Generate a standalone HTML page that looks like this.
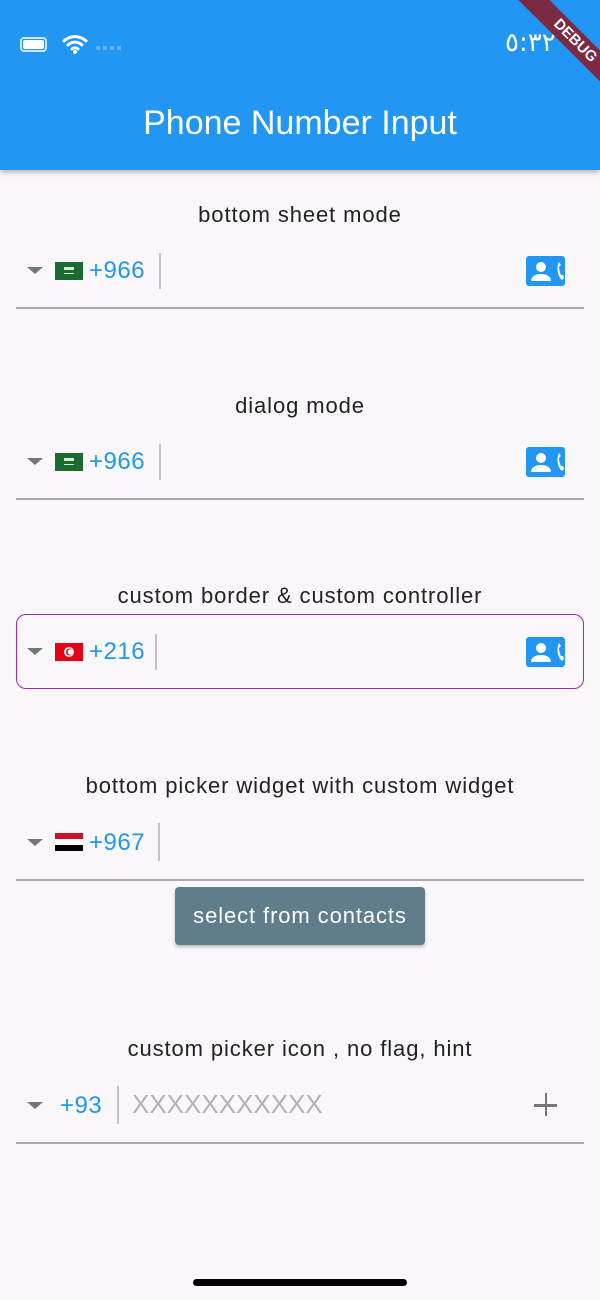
<!DOCTYPE html>
<html><head><meta charset="utf-8"><style>
*{margin:0;padding:0;box-sizing:border-box}
body{width:600px;height:1300px;background:#f9f7fa;font-family:"Liberation Sans","DejaVu Sans",sans-serif;position:relative;overflow:hidden}
.bar{position:absolute;left:0;top:0;width:600px;height:170px;background:#2196f3;box-shadow:0 2px 5px rgba(0,0,0,.3);overflow:hidden}
.title{position:absolute;top:104px;width:600px;text-align:center;color:#fff;font-size:34px}
.lbl{position:absolute;width:600px;text-align:center;font-size:22px;letter-spacing:0.9px;color:#222}
.line{position:absolute;left:16px;width:568px;height:2px;background:#a9a9ab}
.tri{position:absolute;left:27px;width:0;height:0;border-left:8px solid transparent;border-right:8px solid transparent;border-top:7px solid #757575}
.code{position:absolute;font-size:24px;letter-spacing:0.5px;color:#2196f3}
.div{position:absolute;width:2px;background:#c2c2c2}
.flag{position:absolute;left:55px;width:28px;height:18px}
.ic{position:absolute;left:526px;width:39px;height:30px}
</style></head><body>
<div class="bar">
 <div style="position:absolute;left:20px;top:37px;width:27px;height:15px;border:2px solid #cfe6fb;border-radius:4px;padding:1px"><div style="background:#fff;width:100%;height:100%;border-radius:2px"></div></div>
 <svg style="position:absolute;left:62px;top:34px" width="26" height="20" viewBox="0 0 26 20"><path d="M2 7a16 16 0 0 1 22 0M6 11a10 10 0 0 1 14 0M10 15a4.5 4.5 0 0 1 6 0" stroke="#fff" stroke-width="3" fill="none" stroke-linecap="round"/><circle cx="13" cy="18" r="2" fill="#fff"/></svg>
 <div style="position:absolute;left:96px;top:46px;width:28px;height:4px;background:repeating-linear-gradient(90deg,#64b0f4 0 4px,transparent 4px 7px)"></div>
 <div style="position:absolute;left:505px;top:28px;color:#fff;font-size:26px;font-family:'DejaVu Sans',sans-serif">٥:٣٢</div>
 <div style="position:absolute;left:495px;top:30px;width:160px;height:22px;background:#7b2a45;transform:rotate(45deg);color:#fff;font-weight:bold;font-size:15px;text-align:center;line-height:22px">DEBUG</div>
 <div class="title">Phone Number Input</div>
</div>

<div class="lbl" style="top:202px">bottom sheet mode</div>
<div class="tri" style="top:267px"></div>
<svg class="flag" style="top:262px" viewBox="0 0 28 18"><rect width="28" height="18" fill="#1a6b2e"/><rect x="9" y="5" width="10" height="3" fill="#d8e8dc"/><rect x="9" y="11" width="10" height="1" fill="#d8e8dc"/></svg>
<div class="code" style="left:89px;top:257px">+966</div>
<div class="div" style="left:159px;top:253px;height:36px"></div>
<svg class="ic" style="top:256px" viewBox="0 0 39 30"><rect width="39" height="30" rx="3" fill="#2196f3"/><circle cx="15" cy="11" r="5" fill="#fff"/><path d="M5 25c0-5 5-7 10-7s10 2 10 7z" fill="#fff"/><path d="M33 6l2 3-2 2c0 3 1 6 2 8l2 0 1 3-2 2c-4-3-6-12-3-18z" fill="#fff"/></svg>
<div class="line" style="top:307px"></div>

<div class="lbl" style="top:393px">dialog mode</div>
<div class="tri" style="top:458px"></div>
<svg class="flag" style="top:453px" viewBox="0 0 28 18"><rect width="28" height="18" fill="#1a6b2e"/><rect x="9" y="5" width="10" height="3" fill="#d8e8dc"/><rect x="9" y="11" width="10" height="1" fill="#d8e8dc"/></svg>
<div class="code" style="left:89px;top:448px">+966</div>
<div class="div" style="left:159px;top:444px;height:36px"></div>
<svg class="ic" style="top:447px" viewBox="0 0 39 30"><rect width="39" height="30" rx="3" fill="#2196f3"/><circle cx="15" cy="11" r="5" fill="#fff"/><path d="M5 25c0-5 5-7 10-7s10 2 10 7z" fill="#fff"/><path d="M33 6l2 3-2 2c0 3 1 6 2 8l2 0 1 3-2 2c-4-3-6-12-3-18z" fill="#fff"/></svg>
<div class="line" style="top:498px"></div>

<div class="lbl" style="top:583px">custom border &amp; custom controller</div>
<div style="position:absolute;left:16px;top:614px;width:568px;height:75px;border:1.5px solid #9c27b0;border-radius:10px"></div>
<div class="tri" style="top:648px"></div>
<svg class="flag" style="top:643px" viewBox="0 0 28 18"><rect width="28" height="18" fill="#e70013"/><circle cx="14" cy="9" r="5" fill="#fff"/><circle cx="14.5" cy="9" r="3.5" fill="#e70013"/><circle cx="15.5" cy="9" r="2.8" fill="#fff"/></svg>
<div class="code" style="left:89px;top:638px">+216</div>
<div class="div" style="left:155px;top:634px;height:36px"></div>
<svg class="ic" style="top:637px" viewBox="0 0 39 30"><rect width="39" height="30" rx="3" fill="#2196f3"/><circle cx="15" cy="11" r="5" fill="#fff"/><path d="M5 25c0-5 5-7 10-7s10 2 10 7z" fill="#fff"/><path d="M33 6l2 3-2 2c0 3 1 6 2 8l2 0 1 3-2 2c-4-3-6-12-3-18z" fill="#fff"/></svg>

<div class="lbl" style="top:773px">bottom picker widget with custom widget</div>
<div class="tri" style="top:839px"></div>
<svg class="flag" style="top:833px" viewBox="0 0 28 18"><rect width="28" height="6" fill="#ce1126"/><rect y="6" width="28" height="6" fill="#fff"/><rect y="12" width="28" height="6" fill="#000"/></svg>
<div class="code" style="left:89px;top:829px">+967</div>
<div class="div" style="left:158px;top:823px;height:38px"></div>
<div class="line" style="top:879px"></div>
<div style="position:absolute;left:175px;top:887px;width:250px;height:58px;background:#607d8b;border-radius:4px;box-shadow:0 2px 3px rgba(0,0,0,.25);color:#fff;font-size:22px;letter-spacing:0.9px;text-align:center;line-height:58px">select from contacts</div>

<div class="lbl" style="top:1036px">custom picker icon , no flag, hint</div>
<div class="tri" style="top:1102px"></div>
<div class="code" style="left:60px;top:1092px">+93</div>
<div class="div" style="left:117px;top:1086px;height:38px"></div>
<div style="position:absolute;left:132px;top:1089px;font-size:26px;color:#b3b3b3">XXXXXXXXXXX</div>
<div style="position:absolute;left:534px;top:1104px;width:23px;height:2.5px;background:#757575"></div>
<div style="position:absolute;left:544.5px;top:1093px;width:2.5px;height:23px;background:#757575"></div>
<div class="line" style="top:1142px"></div>

<div style="position:absolute;left:193px;top:1279px;width:214px;height:7px;background:#000;border-radius:4px"></div>
</body></html>
